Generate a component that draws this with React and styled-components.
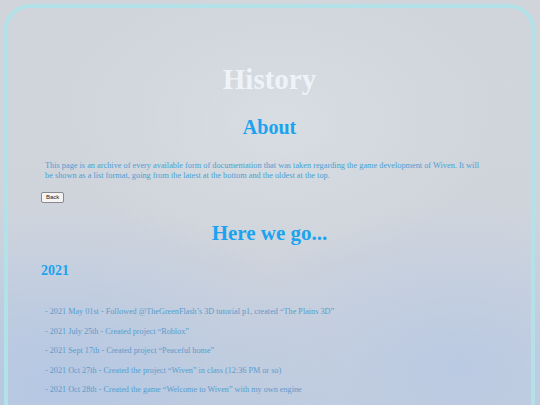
import React from "react";
import styled, { createGlobalStyle } from "styled-components";

const GlobalStyle = createGlobalStyle`
    html, body {
        margin: 0;
        padding: 0;
        height: 100%;
        overflow: hidden;
    }
    body {
        font-family: "Liberation Serif", "Times New Roman", serif;
        background:
            radial-gradient(ellipse 40% 35% at 52% 30%, rgba(216, 222, 226, 0.9), rgba(216, 222, 226, 0) 100%),
            radial-gradient(ellipse 55% 45% at 10% 95%, rgba(178, 198, 228, 0.85), rgba(178, 198, 228, 0) 100%),
            radial-gradient(ellipse 45% 40% at 85% 90%, rgba(182, 200, 228, 0.75), rgba(182, 200, 228, 0) 100%),
            linear-gradient(180deg, #d1d5db 0%, #cfd4dc 60%, #c5cedd 100%);
    }
`;

const Frame = styled.div`
    margin: 4px 5px 0 4px;
    min-height: 460px;
    border: 4px solid #b2e2e8;
    border-radius: 26px;
    box-sizing: border-box;
    padding: 0 33px;
`;

const Title = styled.h1`
    margin: 0;
    padding-top: 55px;
    text-align: center;
    font-size: 29px;
    font-weight: bold;
    color: #eef3f8;
`;

const Heading = styled.h2`
    margin: ${(p) => p.$top}px 0 0;
    text-align: ${(p) => (p.$left ? "left" : "center")};
    font-size: ${(p) => p.$size}px;
    font-weight: bold;
    color: #1ca3ef;
`;

const Intro = styled.p`
    margin: 22px 0 0;
    padding: 0 4px;
    max-width: 442px;
    font-size: 8.3px;
    line-height: 10px;
    color: #4aa0d4;
`;

const BackButton = styled.button`
    display: block;
    margin-top: 11px;
    padding: 1px 4px;
    font-family: "Liberation Sans", Arial, sans-serif;
    font-size: 6px;
    line-height: 7px;
    color: #222;
    background: #f4f4f4;
    border: 1px solid #8a8a8a;
    border-radius: 2px;
`;

const Timeline = styled.ul`
    list-style: none;
    margin: 28px 0 0;
    padding: 0 4px;
    display: flex;
    flex-direction: column;
    gap: 9.5px;
`;

const Entry = styled.li`
    font-size: 8.2px;
    line-height: 10px;
    color: #5a9ccc;
`;

const entries2021 = [
    "- 2021 May 01st - Followed @TheGreenFlash\u2019s 3D tutorial p1, created \u201cThe Plains 3D\u201d",
    "- 2021 July 25th - Created project \u201cRoblox\u201d",
    "- 2021 Sept 17th - Created project \u201cPeaceful home\u201d",
    "- 2021 Oct 27th - Created the project \u201cWiven\u201d in class (12:36 PM or so)",
    "- 2021 Oct 28th - Created the game \u201cWelcome to Wiven\u201d with my own engine",
];

export default function App() {
    return (
        <>
            <GlobalStyle />
            <Frame>
                <Title>History</Title>
                <Heading $top={20} $size={20}>About</Heading>
                <Intro>
                    This page is an archive of every available form of documentation that was taken regarding the game
                    development of Wiven. It will be shown as a list format, going from the latest at the bottom and the
                    oldest at the top.
                </Intro>
                <BackButton>Back</BackButton>
                <Heading $top={18} $size={21}>Here we go...</Heading>
                <Heading $top={17} $size={14} $left>2021</Heading>
                <Timeline>
                    {entries2021.map((text) => (
                        <Entry key={text}>{text}</Entry>
                    ))}
                </Timeline>
            </Frame>
        </>
    );
}
